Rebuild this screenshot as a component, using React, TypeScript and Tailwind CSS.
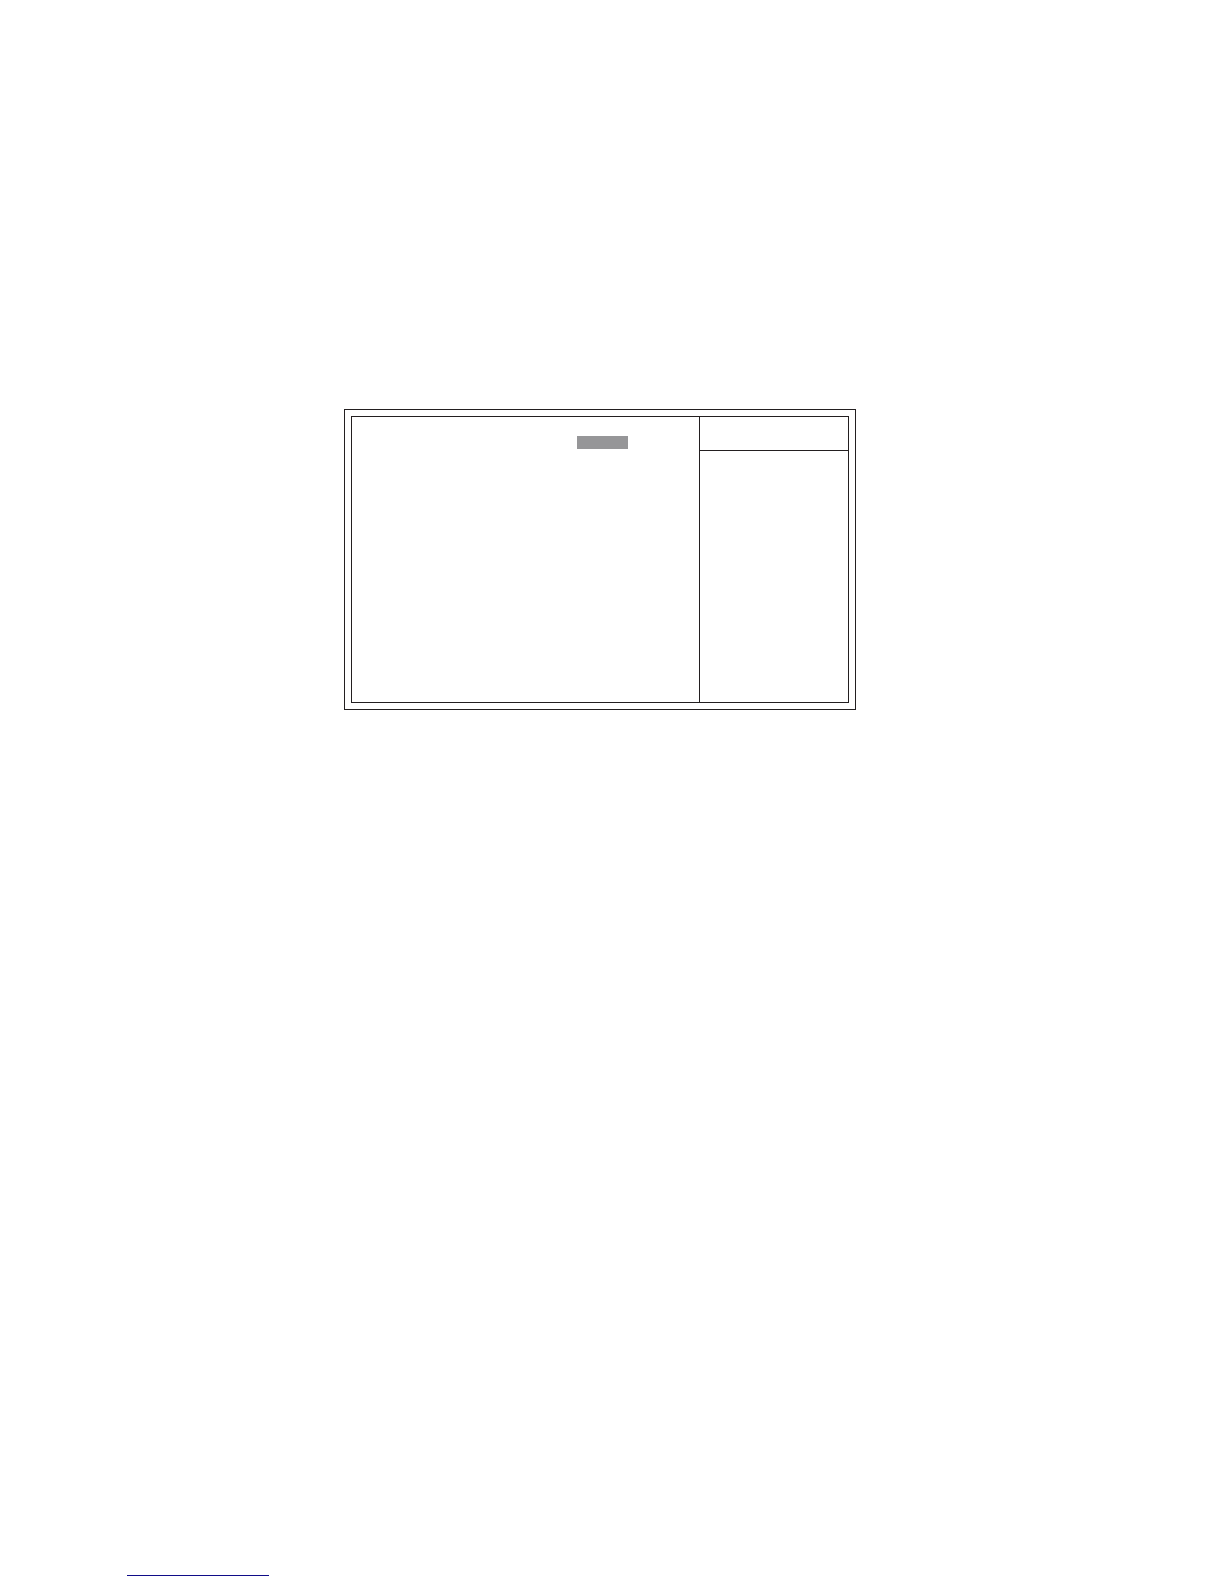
import React from 'react';

function SettingsPanel() {
    return (
        <section className="border border-[#231f20] p-[6px]">
            <div className="flex min-h-[287px] border border-[#231f20]">
                {/* main column with the selected value */}
                <div className="flex-1 pt-[19px] pr-[71px]">
                    <div className="ml-auto h-[13px] w-[51px] bg-[#969698]" />
                </div>

                {/* help column */}
                <aside className="w-[149px] border-l border-[#231f20]">
                    <div className="h-[34px] border-b border-[#231f20]" />
                </aside>
            </div>
        </section>
    );
}

export default function App() {
    return (
        <div className="flex min-h-screen flex-col bg-white">
            <main className="pt-[409px] pr-[368px] pl-[344px]">
                <SettingsPanel />
            </main>

            <footer className="mt-auto pb-2 pl-[127px]">
                <a
                    href="#"
                    aria-label="Home"
                    className="block h-4 w-[142px] border-b border-[#100c88]"
                />
            </footer>
        </div>
    );
}
